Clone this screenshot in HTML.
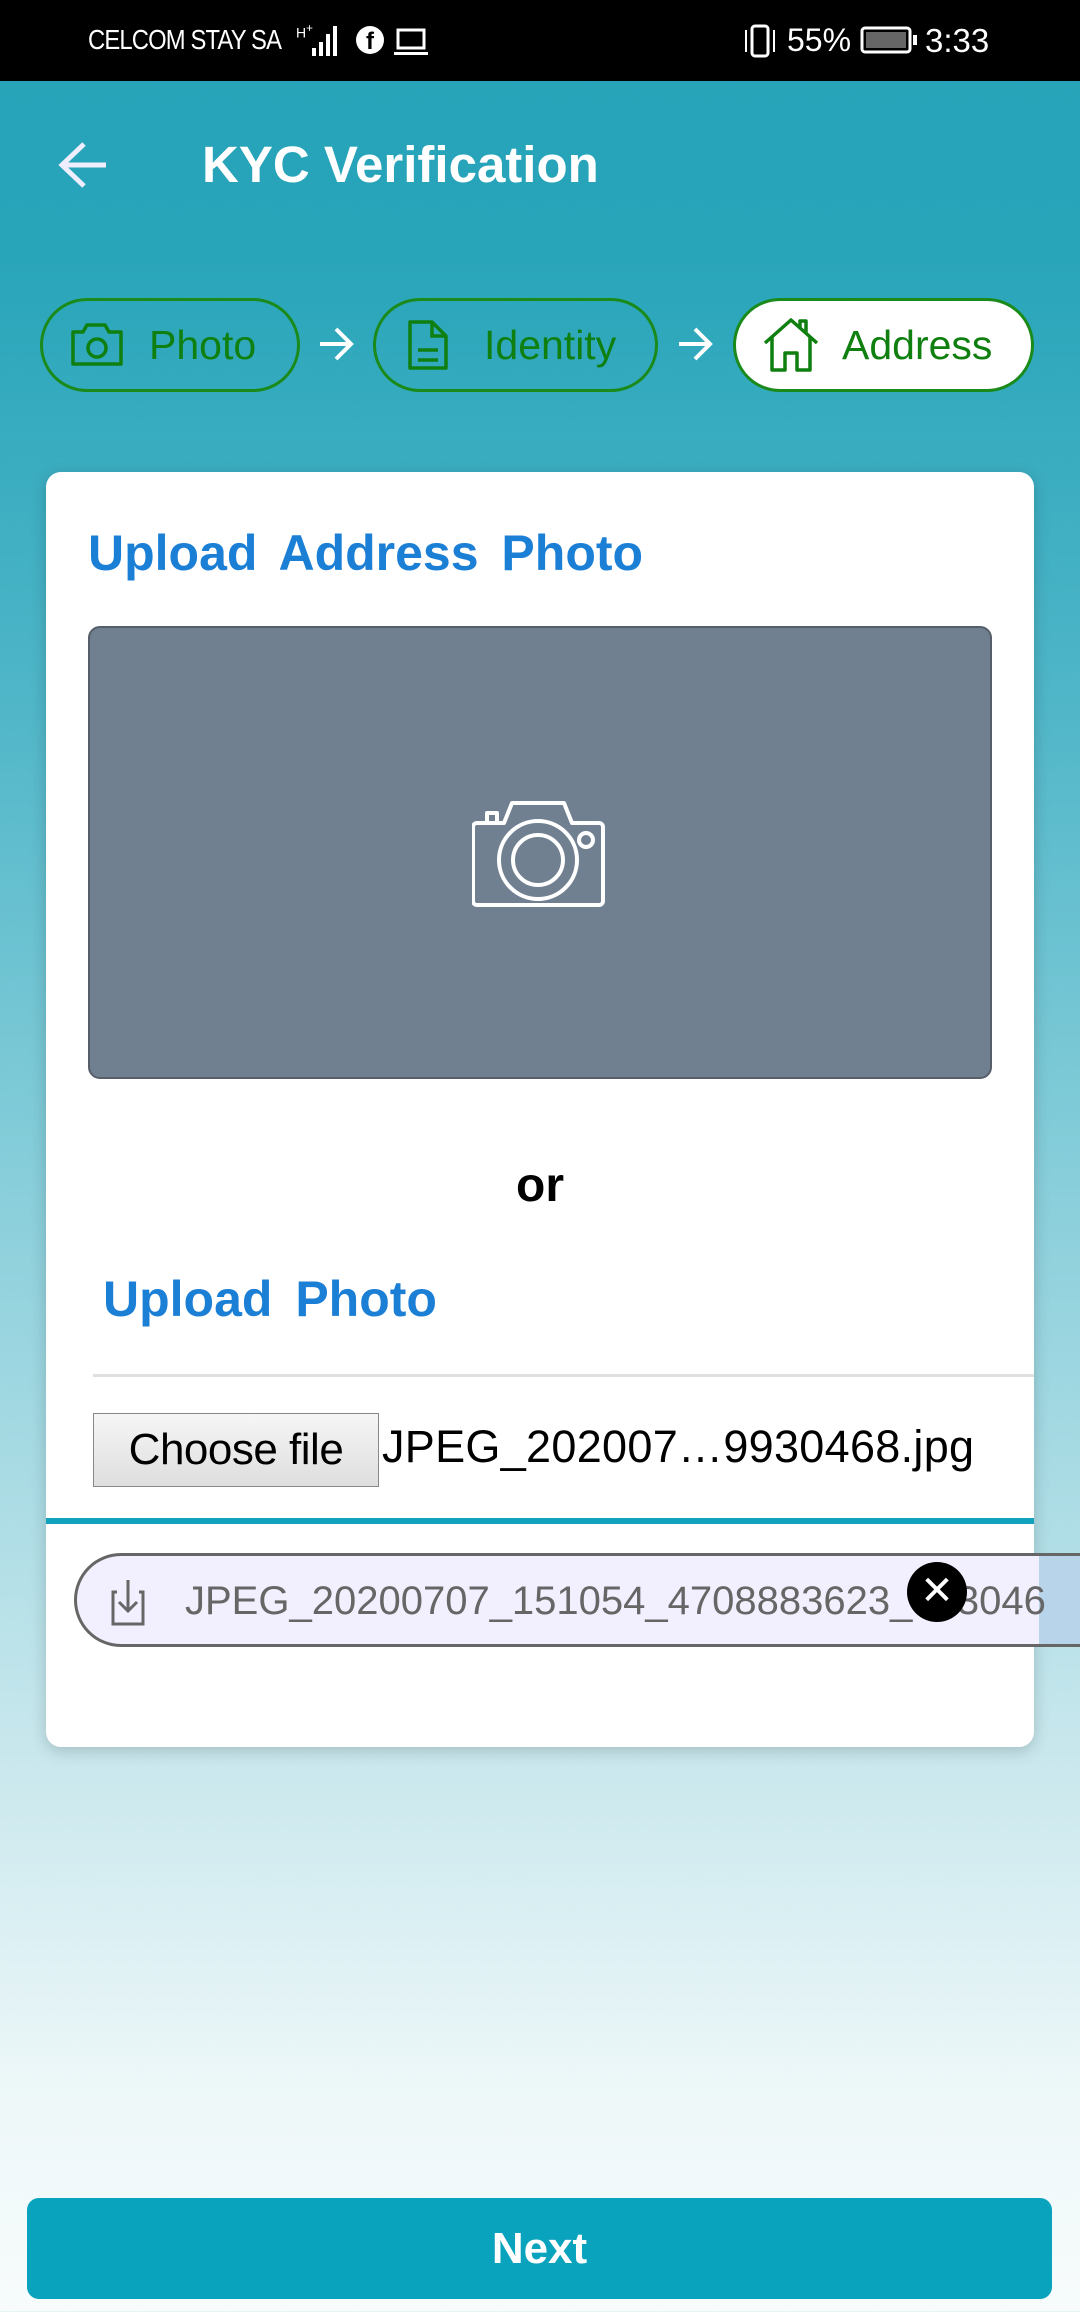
<!DOCTYPE html>
<html><head><meta charset="utf-8"><style>
*{margin:0;padding:0;box-sizing:border-box}
body{width:1080px;height:2312px;overflow:hidden;font-family:"Liberation Sans",sans-serif;position:relative;
background:linear-gradient(180deg,#27a3b9 0px,#29a5ba 260px,#4fb6c8 700px,#8acfdb 1200px,#c8e7ed 1750px,#eef8f9 2100px,#f7fbfb 2312px)}
.abs{position:absolute}
.status{left:0;top:0;width:1080px;height:81px;background:#000;color:#fff}
.pill{position:absolute;top:298px;height:94px;border:3px solid #1a8a1a;border-radius:47px;color:#0f7f0f;font-size:41px;display:flex;align-items:center}
.card{left:46px;top:472px;width:988px;height:1275px;background:#fff;border-radius:15px;box-shadow:0 4px 16px rgba(0,0,0,.18);overflow:visible}
.h{color:#1b7fd6;font-weight:bold;font-size:50px;word-spacing:9px}
</style></head><body>
<div class="abs status">
<div class="abs" style="left:88px;top:24px;font-size:28px;letter-spacing:-1px;transform:scaleX(.85);transform-origin:left">CELCOM STAY SA</div>
<div class="abs" style="left:296px;top:22px;font-size:14px">H<sup>+</sup></div>
<svg class="abs" style="left:300px;top:22px" width="45" height="36"><rect x="12" y="26" width="4" height="8" fill="#fff"/><rect x="19" y="20" width="4" height="14" fill="#fff"/><rect x="26" y="12" width="4" height="22" fill="#fff"/><rect x="33" y="4" width="4" height="30" fill="#fff"/></svg>
<div class="abs" style="left:356px;top:26px;width:28px;height:28px;border-radius:50%;background:#fff;color:#000;font-weight:bold;font-size:24px;text-align:center;line-height:32px">f</div>
<svg class="abs" style="left:394px;top:28px" width="36" height="28"><rect x="4" y="2" width="26" height="18" fill="none" stroke="#fff" stroke-width="3"/><rect x="0" y="24" width="34" height="3" fill="#fff"/></svg>
<svg class="abs" style="left:742px;top:24px" width="40" height="34"><rect x="10" y="2" width="16" height="30" rx="3" fill="none" stroke="#fff" stroke-width="3"/><path d="M4 6v22M32 6v22" stroke="#fff" stroke-width="2"/></svg>
<div class="abs" style="left:787px;top:22px;font-size:32px">55%</div>
<svg class="abs" style="left:860px;top:26px" width="60" height="30"><rect x="2" y="2" width="48" height="24" rx="3" fill="none" stroke="#fff" stroke-width="3"/><rect x="6" y="6" width="40" height="16" fill="#666"/><rect x="53" y="9" width="4" height="10" fill="#fff"/></svg>
<div class="abs" style="left:925px;top:22px;font-size:33px">3:33</div>
</div>
<svg class="abs" style="left:56px;top:140px" width="56" height="50"><path d="M50 25H6M28 4L6 25l22 21" fill="none" stroke="#eef" stroke-width="5"/></svg>
<div class="abs" style="left:202px;top:135px;color:#fff;font-size:51px;font-weight:bold">KYC Verification</div>

<div class="pill" style="left:40px;width:260px"><svg style="margin-left:26px" width="56" height="46" viewBox="0 0 56 46"><path d="M4 10h10l4-7h18l4 7h12v32H4z" fill="none" stroke="#0f7f0f" stroke-width="3.5" stroke-linejoin="round"/><circle cx="28" cy="26" r="9" fill="none" stroke="#0f7f0f" stroke-width="3.5"/></svg><span style="margin-left:24px">Photo</span></div>
<svg class="abs" style="left:318px;top:326px" width="38" height="36"><path d="M2 18h32M18 3l15 15-15 15" fill="none" stroke="#fff" stroke-width="4"/></svg>
<div class="pill" style="left:373px;width:285px"><svg style="margin-left:30px" width="44" height="54" viewBox="0 0 44 54"><path d="M4 4h22l14 14v32H4z" fill="none" stroke="#0f7f0f" stroke-width="3.5" stroke-linejoin="round"/><path d="M26 4v14h14M12 32h20M12 42h20" fill="none" stroke="#0f7f0f" stroke-width="3.5"/></svg><span style="margin-left:34px">Identity</span></div>
<svg class="abs" style="left:677px;top:326px" width="38" height="36"><path d="M2 18h32M18 3l15 15-15 15" fill="none" stroke="#fff" stroke-width="4"/></svg>
<div class="pill" style="left:733px;width:301px;background:#fff"><svg style="margin-left:26px" width="58" height="56" viewBox="0 0 58 56"><path d="M3 26L29 3l26 23M10 20v33h13V36h12v17h13V20M38 10V4h6v12" fill="none" stroke="#0f7f0f" stroke-width="3.5" stroke-linejoin="round"/></svg><span style="margin-left:22px">Address</span></div>

<div class="abs card">
<div class="abs h" style="left:42px;top:52px">Upload Address Photo</div>
<div class="abs" style="left:42px;top:154px;width:904px;height:453px;background:#708090;border:2px solid #555e69;border-radius:12px"></div>
<svg class="abs" style="left:426px;top:327px" width="134" height="110" viewBox="474 799 134 110"><path d="M479 823h27l8-20h52l8 20h27a4 4 0 0 1 4 4v74a4 4 0 0 1-4 4H479a4 4 0 0 1-4-4v-74a4 4 0 0 1 4-4zM489 823v-10h10v10" fill="none" stroke="#fff" stroke-width="4" stroke-linejoin="round"/><circle cx="540" cy="860" r="39" fill="none" stroke="#fff" stroke-width="4"/><circle cx="540" cy="860" r="25" fill="none" stroke="#fff" stroke-width="4"/><circle cx="588" cy="840" r="7" fill="none" stroke="#fff" stroke-width="4"/></svg>
<div class="abs" style="left:0;width:988px;top:686px;text-align:center;font-weight:bold;font-size:48px">or</div>
<div class="abs h" style="left:57px;top:798px">Upload Photo</div>
<div class="abs" style="left:47px;top:902px;width:941px;height:3px;background:#e0e0e0"></div>
<div class="abs" style="left:47px;top:941px;width:286px;height:74px;border:1px solid #888;background:linear-gradient(#f6f6f6,#dedede);font-size:44px;text-align:center;line-height:72px;letter-spacing:-0.5px">Choose file</div>
<div class="abs" style="left:336px;top:949px;font-size:45px;letter-spacing:0.3px">JPEG_202007…9930468.jpg</div>
<div class="abs" style="left:0;top:1046px;width:988px;height:6px;background:#12a2bb"></div>
</div>
<div class="abs" style="left:74px;top:1553px;width:1020px;height:94px;border:3px solid #666;border-right:none;border-radius:47px 0 0 47px;background:#f2effe;overflow:hidden">
<div class="abs" style="left:962px;top:0;width:60px;height:94px;background:#b8d4ea"></div>
<svg class="abs" style="left:32px;top:22px" width="44" height="50"><path d="M8 14H4v32h30V14h-4M19 2v30M10 24l9 9 9-9" fill="none" stroke="#666" stroke-width="3"/></svg>
<div class="abs" style="left:108px;top:23px;font-size:40px;color:#666;white-space:nowrap">JPEG_20200707_151054_4708883623_993046</div>
</div>
<div class="abs" style="left:907px;top:1562px;width:60px;height:60px;border-radius:50%;background:#000;color:#fff;font-size:40px;text-align:center;line-height:58px">✕</div>

<div class="abs" style="left:27px;top:2198px;width:1025px;height:101px;background:#09a3bd;border-radius:12px;color:#fff;font-weight:bold;font-size:44px;text-align:center;line-height:101px">Next</div>
</body></html>
